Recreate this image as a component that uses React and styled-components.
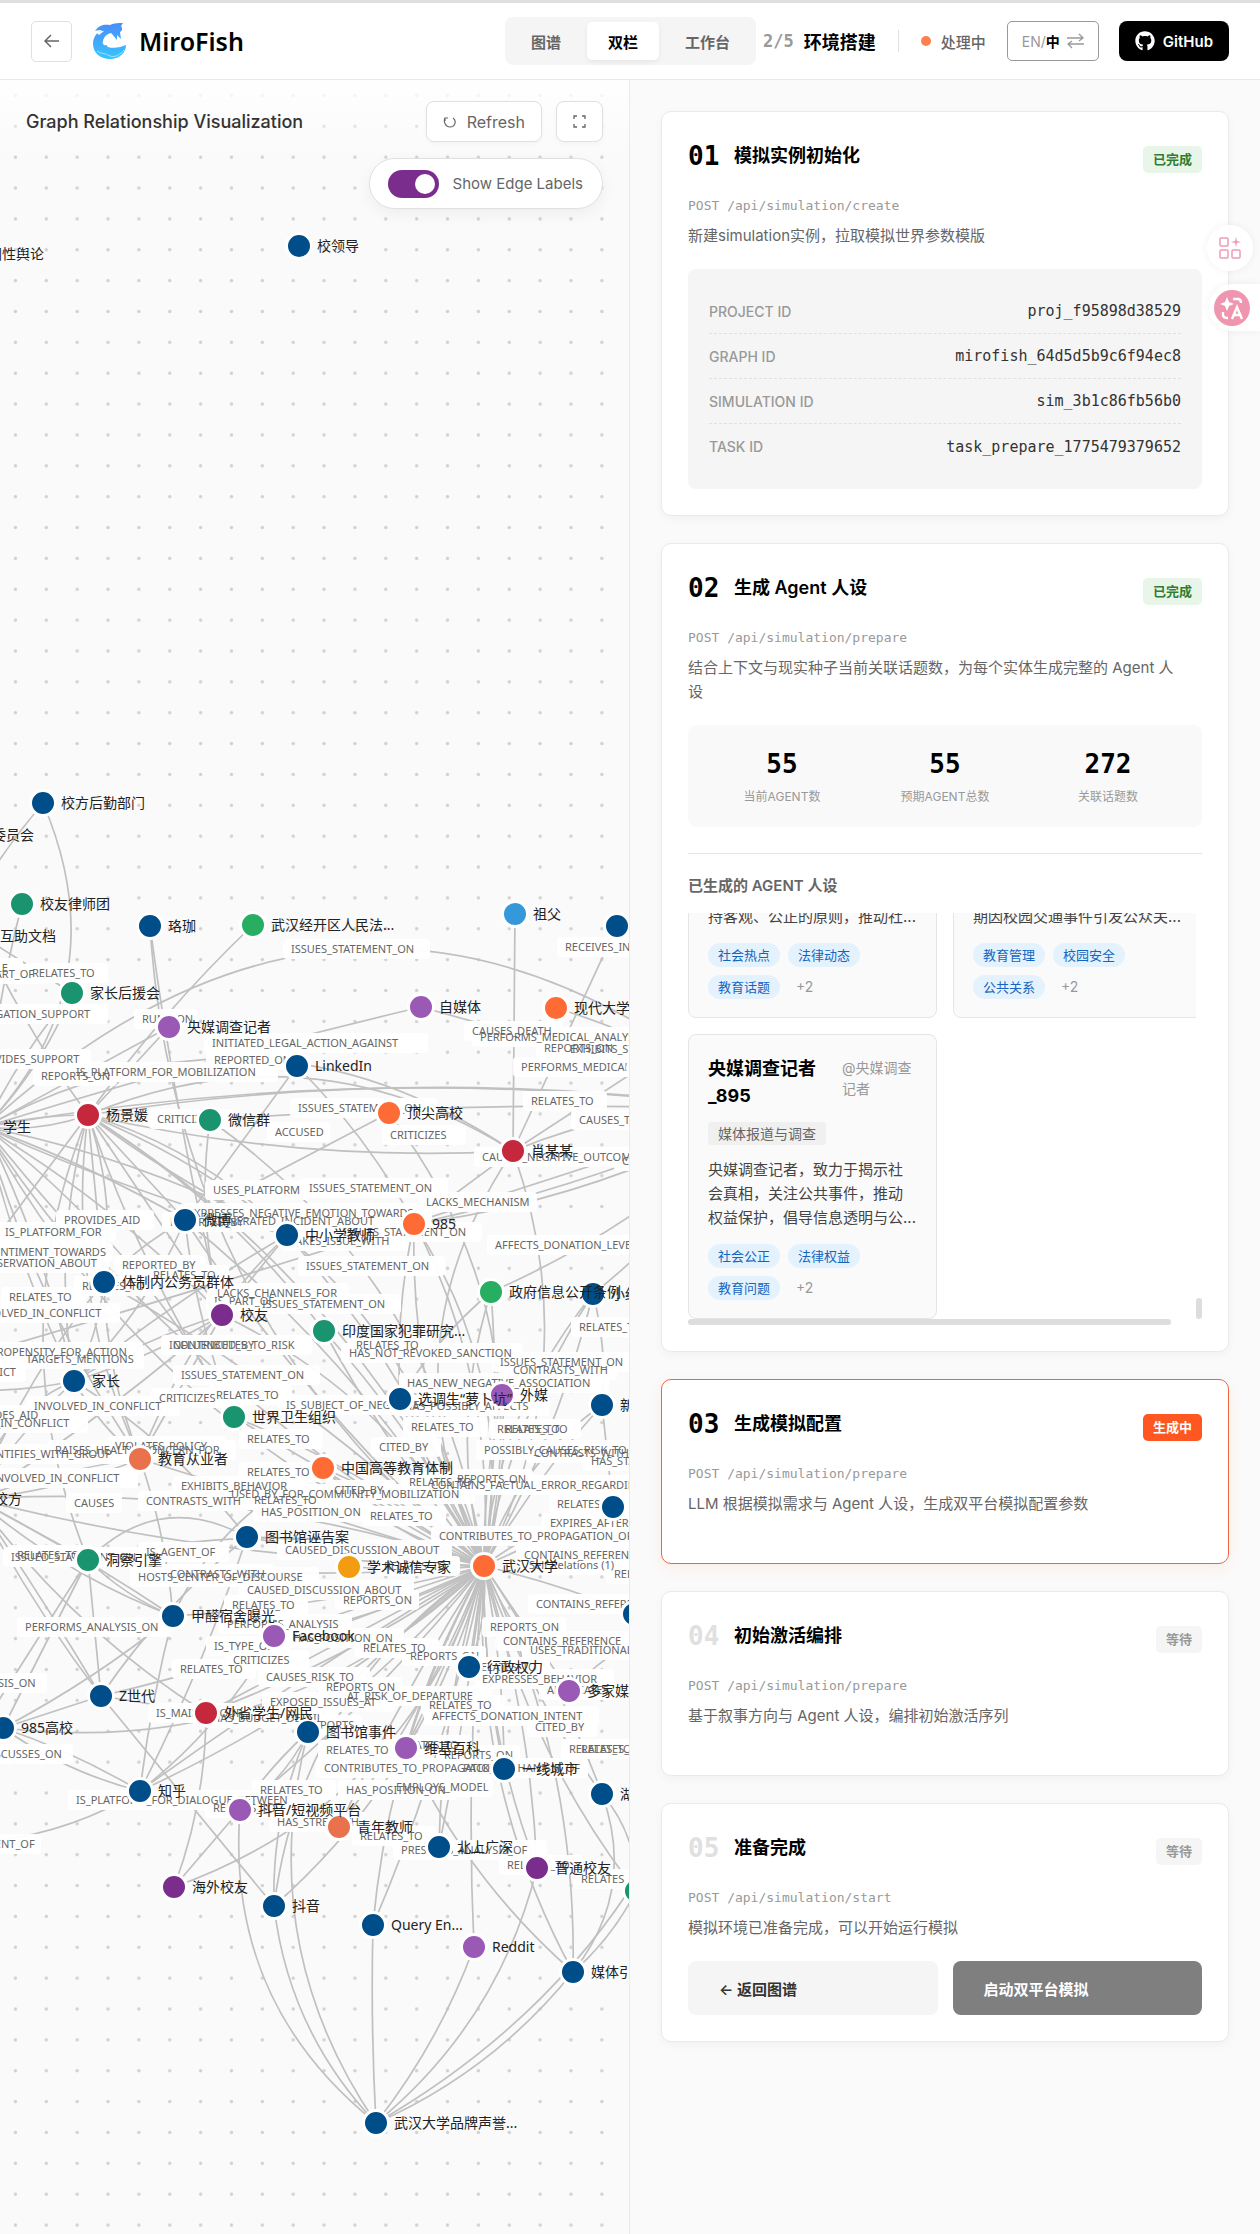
import { useState } from "react";
import styled, { createGlobalStyle, css } from "styled-components";
import { FaGithub } from "react-icons/fa";

const sans = `Inter, "Noto Sans CJK SC", sans-serif`;
const mono = `"DejaVu Sans Mono", "Noto Sans CJK SC", monospace`;

const GlobalStyle = createGlobalStyle`
  * {
    box-sizing: border-box;
  }
  body {
    margin: 0;
    font-family: ${sans};
    background: #fafafa;
  }
  button {
    font-family: inherit;
    cursor: pointer;
  }
`;

const Page = styled.div`
  min-height: 100vh;
  display: flex;
  flex-direction: column;
  border-top: 3px solid #dfdfdf;
  overflow: hidden;
`;

/* ---------- header ---------- */

const Header = styled.header`
  height: 77px;
  padding: 0 31px;
  display: flex;
  align-items: center;
  justify-content: space-between;
  background: #fff;
  border-bottom: 1px solid #eaeaea;
`;

const HeaderSide = styled.div`
  display: flex;
  align-items: center;
`;

const BackButton = styled.button`
  width: 41px;
  height: 41px;
  padding: 0;
  margin-right: 21px;
  border: 1px solid #e0e0e0;
  border-radius: 5px;
  background: #fff;
  display: flex;
  align-items: center;
  justify-content: center;
`;

const Brand = styled.a`
  display: flex;
  align-items: center;
  gap: 12px;
  color: #000;
  text-decoration: none;
  font-family: "Noto Sans", sans-serif;
  font-size: 25px;
  font-weight: 600;
`;

const Tabs = styled.nav`
  display: flex;
  gap: 5px;
  padding: 5px;
  margin-right: 7px;
  border-radius: 8px;
  background: #f5f5f5;
`;

const Tab = styled.button`
  height: 38px;
  padding: 0 21px;
  border: none;
  border-radius: 5px;
  font-size: 15px;
  font-weight: 600;
  color: #666;
  background: transparent;
  ${(props) =>
    props.$active &&
    css`
      color: #000;
      background: #fff;
      box-shadow: 0 2px 5px rgba(0, 0, 0, 0.06);
    `}
`;

const StepNumber = styled.span`
  font-family: ${mono};
  font-size: 17px;
  font-weight: 700;
  color: #999;
  margin-right: 10px;
`;

const StepName = styled.span`
  font-size: 18px;
  font-weight: 700;
  color: #000;
`;

const Divider = styled.span`
  width: 1px;
  height: 22px;
  margin: 0 22px;
  background: #e0e0e0;
`;

const Status = styled.span`
  display: flex;
  align-items: center;
  gap: 10px;
  margin-right: 21px;
  font-size: 15px;
  font-weight: 500;
  color: #666;

  &::before {
    content: "";
    width: 10px;
    height: 10px;
    border-radius: 50%;
    background: #ff7f50;
  }
`;

const LangButton = styled.button`
  height: 40px;
  padding: 0 14px;
  margin-right: 20px;
  display: flex;
  align-items: center;
  border: 1px solid #999;
  border-radius: 5px;
  background: #fff;
  font-size: 14px;
  color: #999;

  strong {
    color: #000;
  }
  svg {
    margin-left: 7px;
  }
`;

const GithubLink = styled.a`
  height: 40px;
  padding: 0 16px;
  display: flex;
  align-items: center;
  gap: 8px;
  border-radius: 8px;
  background: #000;
  color: #fff;
  font-size: 15px;
  font-weight: 600;
  text-decoration: none;
`;

/* ---------- graph panel ---------- */

const Main = styled.main`
  flex: 1;
  display: grid;
  grid-template-columns: 1fr 1fr;
`;

const GraphPanel = styled.section`
  position: relative;
  border-right: 1px solid #eaeaea;
  overflow: hidden;
`;

const Canvas = styled.svg`
  position: absolute;
  inset: 0;
  width: 100%;
  height: 100%;
`;

const GraphHeader = styled.div`
  position: relative;
  display: flex;
  align-items: center;
  gap: 14px;
  padding: 21px 26px 16px;
  background: linear-gradient(
    rgba(255, 255, 255, 0.95),
    rgba(255, 255, 255, 0)
  );
`;

const GraphTitle = styled.h2`
  flex: 1;
  margin: 0;
  font-size: 18px;
  font-weight: 500;
  color: #333;
`;

const ToolButton = styled.button`
  height: 41px;
  padding: 0 16px;
  display: flex;
  align-items: center;
  gap: 10px;
  border: 1px solid #e0e0e0;
  border-radius: 8px;
  background: #fff;
  box-shadow: 0 2px 5px rgba(0, 0, 0, 0.03);
  font-size: 16px;
  color: #666;
`;

const Toggle = styled.label`
  position: relative;
  width: fit-content;
  height: 51px;
  margin: 0 26px 0 auto;
  padding: 0 19px 0 18px;
  display: flex;
  align-items: center;
  gap: 14px;
  border: 1px solid #e0e0e0;
  border-radius: 26px;
  background: #fff;
  box-shadow: 0 5px 15px rgba(0, 0, 0, 0.05);
  font-size: 15px;
  color: #666;
`;

const Switch = styled.input`
  appearance: none;
  width: 51px;
  height: 28px;
  margin: 0;
  padding: 4px;
  display: flex;
  justify-content: flex-start;
  border-radius: 14px;
  background: #ccc;

  &:checked {
    justify-content: flex-end;
    background: #7b2d8e;
  }
  &::before {
    content: "";
    width: 20px;
    height: 20px;
    border-radius: 50%;
    background: #fff;
  }
`;

const NodeLabel = styled.text`
  font-family: "Noto Sans", "Noto Sans CJK SC", sans-serif;
  font-size: 14px;
  fill: #222;
`;

const EdgeLabel = styled.text`
  font-family: "Noto Sans", sans-serif;
  font-size: 11px;
  fill: #666;
`;

const blue = "#004e89";
const teal = "#1a936f";
const green = "#27ae60";
const purple = "#9b59b6";
const violet = "#7b2d8e";
const orange = "#ff6b35";
const coral = "#e9724c";
const red = "#c5283d";

// [x, y, colour, name]
const nodes = {
  leader: [299, 246, blue, "校领导"],
  publicOpinion: [-30, 254, blue, "间性舆论"],
  logistics: [43, 803, blue, "校方后勤部门"],
  committee: [-54, 835, teal, "纪律委员会"],
  lawyers: [22, 904, teal, "校友律师团"],
  luojia: [150, 926, blue, "珞珈"],
  court: [253, 925, green, "武汉经开区人民法..."],
  grandpa: [515, 914, "#3498db", "祖父"],
  right1: [617, 926, blue, ""],
  docs: [-18, 936, orange, "互助文档"],
  parents: [72, 993, teal, "家长后援会"],
  selfMedia: [421, 1007, purple, "自媒体"],
  modern: [556, 1008, orange, "现代大学"],
  reporter: [169, 1027, purple, "央媒调查记者"],
  linkedin: [297, 1066, blue, "LinkedIn"],
  right2: [640, 1068, orange, ""],
  topUni: [389, 1113, orange, "顶尖高校"],
  yang: [88, 1115, red, "杨景媛"],
  wechat: [210, 1120, teal, "微信群"],
  student: [-15, 1127, blue, "学生"],
  xiao: [513, 1151, red, "肖某某"],
  weibo: [185, 1220, blue, "微博"],
  p985: [414, 1224, orange, "985"],
  teachers: [287, 1235, blue, "中小学教师"],
  civil: [104, 1282, blue, "体制内公务员群体"],
  policy: [491, 1292, green, "政府信息公开条例"],
  redbook: [593, 1294, blue, "小红书"],
  alumni: [222, 1315, violet, "校友"],
  india: [324, 1331, teal, "印度国家犯罪研究..."],
  family: [74, 1381, blue, "家长"],
  foreign: [502, 1395, purple, "外媒"],
  selected: [400, 1399, blue, "选调生“萝卜坑”"],
  news: [602, 1405, blue, "新华社"],
  who: [234, 1417, teal, "世界卫生组织"],
  educator: [140, 1459, coral, "教育从业者"],
  eduSystem: [323, 1468, orange, "中国高等教育体制"],
  school: [-24, 1499, orange, "校方"],
  right3: [613, 1507, blue, ""],
  library: [247, 1537, blue, "图书馆诬告案"],
  insight: [88, 1560, teal, "洞察引擎"],
  whu: [484, 1566, orange, "武汉大学"],
  integrity: [349, 1567, "#f39c12", "学术诚信专家"],
  right4: [634, 1614, blue, ""],
  dorm: [173, 1616, blue, "甲醛宿舍曝光"],
  facebook: [274, 1636, purple, "Facebook"],
  power: [469, 1667, blue, "行政权力"],
  media: [569, 1691, purple, "多家媒体"],
  genZ: [101, 1696, blue, "Z世代"],
  netizen: [206, 1713, red, "外省学生/网民"],
  s985: [3, 1728, blue, "985高校"],
  libEvent: [308, 1732, blue, "图书馆事件"],
  wiki: [406, 1748, purple, "维基百科"],
  tier1: [504, 1769, blue, "一线城市"],
  zhihu: [140, 1791, blue, "知乎"],
  lake: [602, 1794, blue, "湖北"],
  shortVideo: [240, 1810, purple, "抖音/短视频平台"],
  young: [339, 1827, coral, "青年教师"],
  bigCities: [439, 1847, blue, "北上广深"],
  common: [537, 1868, violet, "普通校友"],
  overseas: [174, 1887, violet, "海外校友"],
  right5: [636, 1891, teal, ""],
  douyin: [274, 1906, blue, "抖音"],
  query: [373, 1925, blue, "Query En..."],
  reddit: [474, 1947, purple, "Reddit"],
  mediaGuide: [573, 1972, blue, "媒体引导"],
  reputation: [376, 2123, blue, "武汉大学品牌声誉..."],
  offTopLeft: [-80, 1010, teal, ""],
  offRight: [760, 1110, orange, ""],
  offRightLow: [740, 1600, blue, ""],
  offLeft: [-110, 1380, teal, ""],
  offLeftLow: [-90, 1840, teal, ""],
};

// [from, to, bend]
const edges = [
  ["logistics", "student", -108],
  ["logistics", "offTopLeft", 20],
  ["lawyers", "student", 10],
  ["docs", "yang", 10],
  ["docs", "parents", 0],
  ["parents", "student", 10],
  ["parents", "student", -16],
  ["luojia", "alumni", 10],
  ["luojia", "whu", 160],
  ["court", "yang", 12],
  ["reporter", "yang", 0],
  ["reporter", "student", 0],
  ["student", "offRight", -340],
  ["selfMedia", "student", 8],
  ["selfMedia", "right2", 0],
  ["student", "xiao", -160],
  ["yang", "xiao", -110],
  ["yang", "offRight", -50],
  ["student", "offRight", -60],
  ["linkedin", "weibo", 0],
  ["linkedin", "whu", -120],
  ["grandpa", "xiao", 0],
  ["right1", "xiao", 0],
  ["modern", "offRight", -20],
  ["right2", "xiao", 0],
  ["xiao", "offRight", -30],
  ["xiao", "p985", 0],
  ["xiao", "whu", -90],
  ["xiao", "whu", 120],
  ["p985", "offRight", 20],
  ["p985", "offRight", 34],
  ["p985", "teachers", 10],
  ["p985", "whu", 40],
  ["p985", "whu", -70],
  ["p985", "selected", 12],
  ["yang", "teachers", 12],
  ["yang", "teachers", -30],
  ["yang", "whu", -90],
  ["yang", "whu", -150],
  ["yang", "xiao", 30],
  ["yang", "weibo", 0],
  ["yang", "civil", 0],
  ["yang", "civil", -20],
  ["yang", "alumni", 0],
  ["yang", "educator", 50],
  ["yang", "family", 30],
  ["yang", "who", 20],
  ["yang", "india", -30],
  ["yang", "insight", 90],
  ["yang", "offLeft", 0],
  ["yang", "student", 6],
  ["yang", "student", -12],
  ["wechat", "alumni", 20],
  ["wechat", "whu", -110],
  ["wechat", "offRight", -16],
  ["student", "weibo", -10],
  ["student", "teachers", 14],
  ["student", "teachers", -24],
  ["student", "civil", 8],
  ["student", "family", -16],
  ["student", "family", 16],
  ["student", "alumni", -20],
  ["student", "who", -40],
  ["student", "educator", 30],
  ["student", "whu", 60],
  ["student", "whu", 120],
  ["student", "school", 30],
  ["topUni", "weibo", 0],
  ["topUni", "whu", -110],
  ["weibo", "whu", -40],
  ["weibo", "whu", 30],
  ["weibo", "who", 14],
  ["weibo", "civil", 8],
  ["weibo", "family", -20],
  ["teachers", "family", 10],
  ["teachers", "whu", -40],
  ["teachers", "alumni", 0],
  ["teachers", "educator", 30],
  ["civil", "whu", -30],
  ["civil", "school", 20],
  ["civil", "family", -10],
  ["civil", "educator", 16],
  ["offLeft", "offRight", 10],
  ["alumni", "family", 10],
  ["alumni", "family", -10],
  ["alumni", "whu", -60],
  ["alumni", "school", -12],
  ["alumni", "educator", 0],
  ["india", "whu", -20],
  ["india", "whu", 14],
  ["policy", "whu", 40],
  ["policy", "whu", -14],
  ["policy", "selected", 12],
  ["policy", "offRight", 30],
  ["redbook", "whu", 30],
  ["redbook", "whu", 46],
  ["redbook", "whu", -20],
  ["redbook", "news", -10],
  ["redbook", "offRight", 20],
  ["family", "school", 10],
  ["family", "school", 40],
  ["family", "offLeft", -20],
  ["family", "educator", 10],
  ["family", "library", -20],
  ["foreign", "whu", 10],
  ["foreign", "whu", -16],
  ["selected", "whu", 12],
  ["selected", "whu", -16],
  ["news", "whu", 10],
  ["news", "whu", 34],
  ["news", "right3", 0],
  ["who", "whu", 0],
  ["who", "whu", -24],
  ["educator", "whu", 0],
  ["educator", "school", -12],
  ["educator", "school", 10],
  ["eduSystem", "whu", 10],
  ["eduSystem", "whu", -14],
  ["eduSystem", "whu", 24],
  ["eduSystem", "dorm", 40],
  ["school", "whu", -50],
  ["school", "whu", 30],
  ["school", "insight", 0],
  ["school", "dorm", 20],
  ["school", "dorm", -6],
  ["school", "s985", 40],
  ["school", "genZ", 10],
  ["school", "netizen", 30],
  ["right3", "whu", 0],
  ["right3", "whu", 16],
  ["library", "whu", 10],
  ["library", "whu", -12],
  ["library", "insight", 60],
  ["library", "zhihu", -10],
  ["insight", "whu", 20],
  ["insight", "whu", -50],
  ["insight", "s985", 0],
  ["insight", "offLeftLow", 0],
  ["insight", "genZ", 0],
  ["insight", "dorm", 10],
  ["integrity", "whu", 4],
  ["right4", "whu", 6],
  ["dorm", "whu", 16],
  ["dorm", "s985", -10],
  ["dorm", "zhihu", 6],
  ["dorm", "educator", 10],
  ["facebook", "whu", 0],
  ["facebook", "whu", 18],
  ["facebook", "zhihu", -20],
  ["power", "whu", 0],
  ["power", "whu", 12],
  ["media", "whu", 0],
  ["media", "whu", -16],
  ["media", "offRightLow", -30],
  ["genZ", "whu", 20],
  ["genZ", "library", -16],
  ["genZ", "s985", 0],
  ["genZ", "douyin", 0],
  ["genZ", "offLeft", 10],
  ["genZ", "netizen", 0],
  ["netizen", "whu", 0],
  ["netizen", "whu", 20],
  ["netizen", "overseas", -16],
  ["s985", "whu", 120],
  ["s985", "zhihu", -8],
  ["s985", "zhihu", 14],
  ["libEvent", "whu", 10],
  ["libEvent", "whu", -14],
  ["libEvent", "shortVideo", 6],
  ["libEvent", "shortVideo", -14],
  ["libEvent", "douyin", 20],
  ["wiki", "whu", 6],
  ["wiki", "whu", -12],
  ["tier1", "whu", 10],
  ["tier1", "whu", -12],
  ["lake", "whu", 16],
  ["lake", "whu", -20],
  ["zhihu", "offLeftLow", -40],
  ["zhihu", "whu", 30],
  ["zhihu", "whu", -10],
  ["shortVideo", "whu", 20],
  ["shortVideo", "overseas", 0],
  ["shortVideo", "reputation", 90],
  ["young", "whu", -10],
  ["young", "whu", 20],
  ["bigCities", "whu", 6],
  ["bigCities", "whu", -20],
  ["wiki", "mediaGuide", 30],
  ["common", "whu", 20],
  ["common", "whu", -30],
  ["common", "reputation", -50],
  ["overseas", "whu", 110],
  ["douyin", "whu", -90],
  ["douyin", "whu", 60],
  ["douyin", "reputation", 40],
  ["query", "whu", -40],
  ["query", "whu", 20],
  ["query", "reputation", 4],
  ["reddit", "whu", -14],
  ["reddit", "reputation", -16],
  ["mediaGuide", "whu", -60],
  ["mediaGuide", "whu", 50],
  ["mediaGuide", "lake", 50],
  ["mediaGuide", "reputation", -30],
  ["right5", "whu", -40],
  ["right5", "mediaGuide", -10],
  ["right5", "lake", 20],
  ["reputation", "libEvent", -90],
  ["reputation", "offRightLow", 150],
];

// [x, y, text]
const edgeLabels = [
  [291, 949, "ISSUES_STATEMENT_ON"],
  [-46, 968, "HAS_TITLE"],
  [-26, 974, "IS_PART_OF"],
  [32, 973, "RELATES_TO"],
  [-24, 1014, "LITIGATION_SUPPORT"],
  [142, 1019, "RUNS_ON"],
  [212, 1043, "INITIATED_LEGAL_ACTION_AGAINST"],
  [-27, 1059, "PROVIDES_SUPPORT"],
  [214, 1060, "REPORTED_ON"],
  [76, 1072, "IS_PLATFORM_FOR_MOBILIZATION"],
  [41, 1076, "REPORTS_ON"],
  [298, 1108, "ISSUES_STATEMENT_ON"],
  [157, 1119, "CRITICIZES"],
  [275, 1132, "ACCUSED"],
  [390, 1135, "CRITICIZES"],
  [565, 947, "RECEIVES_INFO"],
  [472, 1031, "CAUSES_DEATH"],
  [480, 1037, "PERFORMS_MEDICAL_ANALYSIS"],
  [544, 1048, "REPORTS_ON"],
  [570, 1049, "EXHIBITS_SYMPTOM"],
  [521, 1067, "PERFORMS_MEDICAL"],
  [531, 1101, "RELATES_TO"],
  [579, 1120, "CAUSES_TRAUMA"],
  [482, 1157, "CAUSES_NEGATIVE_OUTCOME"],
  [622, 1161, "CITED_BY"],
  [213, 1190, "USES_PLATFORM"],
  [309, 1188, "ISSUES_STATEMENT_ON"],
  [426, 1202, "LACKS_MECHANISM"],
  [188, 1213, "EXPRESSES_NEGATIVE_EMOTION_TOWARDS"],
  [64, 1220, "PROVIDES_AID"],
  [170, 1222, "REPORTED_BY"],
  [214, 1221, "GENERATED_INCIDENT_ABOUT"],
  [5, 1232, "IS_PLATFORM_FOR"],
  [343, 1232, "ISSUES_STATEMENT_ON"],
  [290, 1241, "TAKES_ISSUE_WITH"],
  [495, 1245, "AFFECTS_DONATION_LEVEL"],
  [-12, 1252, "SENTIMENT_TOWARDS"],
  [-16, 1263, "RESERVATION_ABOUT"],
  [122, 1265, "REPORTED_BY"],
  [306, 1266, "ISSUES_STATEMENT_ON"],
  [153, 1275, "RELATES_TO"],
  [82, 1286, "RELATES_TO"],
  [217, 1293, "LACKS_CHANNELS_FOR"],
  [9, 1297, "RELATES_TO"],
  [214, 1301, "IS_PART_OF"],
  [262, 1304, "ISSUES_STATEMENT_ON"],
  [-26, 1313, "INVOLVED_IN_CONFLICT"],
  [579, 1327, "RELATES_TO"],
  [169, 1345, "INFLUENCED_BY"],
  [173, 1345, "CONTRIBUTES_TO_RISK"],
  [356, 1345, "RELATES_TO"],
  [-10, 1352, "PROPENSITY_FOR_ACTION"],
  [349, 1353, "HAS_NOT_REVOKED_SANCTION"],
  [26, 1359, "TARGETS_MENTIONS"],
  [500, 1362, "ISSUES_STATEMENT_ON"],
  [513, 1370, "CONTRASTS_WITH"],
  [-36, 1372, "CONFLICT"],
  [181, 1375, "ISSUES_STATEMENT_ON"],
  [407, 1383, "HAS_NEW_NEGATIVE_ASSOCIATION"],
  [216, 1395, "RELATES_TO"],
  [159, 1398, "CRITICIZES"],
  [286, 1405, "IS_SUBJECT_OF_NEGATIVE"],
  [404, 1406, "HAS_POSSIBLY_AFFECTS"],
  [34, 1406, "INVOLVED_IN_CONFLICT"],
  [-38, 1415, "PROVIDES_AID"],
  [-58, 1423, "INVOLVED_IN_CONFLICT"],
  [411, 1427, "RELATES_TO"],
  [497, 1429, "RELATES_TO"],
  [505, 1429, "RELATES_TO"],
  [247, 1439, "RELATES_TO"],
  [115, 1446, "VIOLATES_POLICY"],
  [379, 1447, "CITED_BY"],
  [55, 1450, "RAISES_HEALTH_CONCERN_FOR"],
  [484, 1450, "POSSIBLY_CAUSES_RISK_TO"],
  [534, 1453, "CONTRASTS_WITH_POLICY"],
  [-22, 1454, "IDENTIFIES_WITH_GROUP"],
  [591, 1461, "HAS_STANCE"],
  [247, 1472, "RELATES_TO"],
  [-8, 1478, "INVOLVED_IN_CONFLICT"],
  [457, 1479, "REPORTS_ON"],
  [409, 1482, "RELATES_TO"],
  [431, 1485, "CONTAINS_FACTUAL_ERROR_REGARDING"],
  [181, 1486, "EXHIBITS_BEHAVIOR"],
  [334, 1490, "CITED_BY"],
  [231, 1494, "USED_BY_FOR_COMMUNITY_MOBILIZATION"],
  [146, 1501, "CONTRASTS_WITH"],
  [254, 1500, "RELATES_TO"],
  [74, 1503, "CAUSES"],
  [557, 1504, "RELATES_TO"],
  [261, 1512, "HAS_POSITION_ON"],
  [370, 1516, "RELATES_TO"],
  [550, 1523, "EXPIRES_AFTER"],
  [439, 1536, "CONTRIBUTES_TO_PROPAGATION_OF"],
  [285, 1550, "CAUSED_DISCUSSION_ABOUT"],
  [146, 1552, "IS_AGENT_OF"],
  [17, 1555, "RELATES_TO"],
  [11, 1557, "ISSUED_STATEMENT_ON"],
  [524, 1555, "CONTAINS_REFERENCE"],
  [529, 1565, "Self Relations (1)"],
  [384, 1566, "RELATES_TO"],
  [170, 1574, "CONTRASTS_WITH"],
  [138, 1577, "HOSTS_CENTER_OF_DISCOURSE"],
  [614, 1574, "RELATES_TO"],
  [247, 1590, "CAUSED_DISCUSSION_ABOUT"],
  [343, 1600, "REPORTS_ON"],
  [536, 1604, "CONTAINS_REFERENCE"],
  [232, 1605, "RELATES_TO"],
  [227, 1624, "PERFORMS_ANALYSIS"],
  [25, 1627, "PERFORMS_ANALYSIS_ON"],
  [490, 1627, "REPORTS_ON"],
  [293, 1638, "HAS_POSITION_ON"],
  [503, 1641, "CONTAINS_REFERENCE"],
  [214, 1646, "IS_TYPE_OF"],
  [363, 1648, "RELATES_TO"],
  [530, 1650, "USES_TRADITIONAL"],
  [410, 1656, "REPORTS_ON"],
  [233, 1660, "CRITICIZES"],
  [474, 1667, "RELATES_TO"],
  [180, 1669, "RELATES_TO"],
  [266, 1677, "CAUSES_RISK_TO"],
  [482, 1679, "EXPRESSES_BEHAVIOR"],
  [-36, 1683, "ANALYSIS_ON"],
  [326, 1687, "REPORTS_ON"],
  [547, 1690, "ADVOCATES"],
  [347, 1696, "AT_RISK_OF_DEPARTURE"],
  [270, 1702, "EXPOSED_ISSUES_AT"],
  [429, 1705, "RELATES_TO"],
  [156, 1713, "IS_MAIN_GROUP"],
  [432, 1716, "AFFECTS_DONATION_INTENT"],
  [212, 1718, "HAS_BUDGET_DETAIL"],
  [307, 1725, "REPORTS"],
  [535, 1727, "CITED_BY"],
  [396, 1745, "RELATES_TO"],
  [569, 1749, "RELATES_TO"],
  [581, 1749, "RELATES_TO"],
  [326, 1750, "RELATES_TO"],
  [444, 1755, "REPORTS_ON"],
  [-17, 1754, "DISCUSSES_ON"],
  [324, 1768, "CONTRIBUTES_TO_PROPAGATION"],
  [463, 1768, "PACK_MECHANISM_OF"],
  [396, 1787, "EMPLOYS_MODEL"],
  [260, 1790, "RELATES_TO"],
  [346, 1790, "HAS_POSITION_ON"],
  [76, 1800, "IS_PLATFORM_FOR_DIALOGUE_BETWEEN"],
  [213, 1808, "RELATES_TO"],
  [277, 1822, "HAS_STRENGTH"],
  [360, 1836, "RELATES_TO"],
  [-49, 1844, "AGREEMENT_OF"],
  [401, 1850, "PRESENTS_ANALYSIS_OF"],
  [507, 1865, "RELATES_TO"],
  [581, 1879, "RELATES_TO"],
];

const LETTER_WIDTH = 7;

function edgePath([from, to, bend]) {
  const [x1, y1] = nodes[from];
  const [x2, y2] = nodes[to];
  const length = Math.hypot(x2 - x1, y2 - y1);
  const cx = (x1 + x2) / 2 - ((y2 - y1) / length) * bend;
  const cy = (y1 + y2) / 2 + ((x2 - x1) / length) * bend;
  return `M${x1} ${y1} Q${cx} ${cy} ${x2} ${y2}`;
}

const Graph = ({ showLabels }) => (
  <Canvas>
    <defs>
      <pattern
        id="dots"
        width="24"
        height="24"
        patternUnits="userSpaceOnUse"
        patternTransform="scale(1.286)"
      >
        <circle cx="12" cy="12" r="1.3" fill="#d0d0d0" />
      </pattern>
    </defs>
    <rect width="100%" height="100%" fill="#fafafa" />
    <rect width="100%" height="100%" fill="url(#dots)" />
    <g transform="translate(0 -80)">
      <g fill="none" stroke="#c0c0c0" strokeWidth="1.7">
        {edges.map((edge, i) => (
          <path key={i} d={edgePath(edge)} />
        ))}
      </g>
      {showLabels && (
        <g>
          {edgeLabels.map(([x, y, text], i) => (
            <rect
              key={i}
              x={x - 8}
              y={y - 10}
              width={text.length * LETTER_WIDTH + 14}
              height="20"
              rx="4"
              fill="#fff"
              fillOpacity="0.95"
            />
          ))}
          {edgeLabels.map(([x, y, text], i) => (
            <EdgeLabel key={i} x={x} y={y + 4}>
              {text}
            </EdgeLabel>
          ))}
        </g>
      )}
      {Object.entries(nodes).map(([id, [x, y, color]]) => (
        <circle
          key={id}
          cx={x}
          cy={y}
          r="12.5"
          fill={color}
          stroke="#fff"
          strokeWidth="3"
        />
      ))}
      {Object.entries(nodes).map(([id, [x, y, , name]]) => (
        <NodeLabel key={id} x={x + 18} y={y + 5}>
          {name}
        </NodeLabel>
      ))}
    </g>
  </Canvas>
);

/* ---------- steps panel ---------- */

const Steps = styled.section`
  min-width: 0;
  padding: 31px;
  display: flex;
  flex-direction: column;
  gap: 27px;
`;

const Card = styled.article`
  padding: 26px;
  border: 1px solid ${(props) => (props.$active ? "#f0663c" : "#eaeaea")};
  border-radius: 10px;
  background: #fff;
  box-shadow: ${(props) =>
    props.$active
      ? "0 5px 15px rgba(255, 87, 34, 0.08)"
      : "0 3px 10px rgba(0, 0, 0, 0.04)"};
`;

const CardHead = styled.div`
  height: 36px;
  margin-bottom: 22px;
  display: flex;
  align-items: center;
`;

const CardNumber = styled.span`
  width: 46px;
  font-family: ${mono};
  font-size: 26px;
  font-weight: 700;
  color: ${(props) => (props.$muted ? "#e0e0e0" : "#000")};
`;

const CardTitle = styled.h3`
  flex: 1;
  margin: 0;
  font-size: 18px;
  line-height: 24px;
  font-weight: 600;
  color: #000;
`;

const badgeColors = {
  done: "color: #2e7d32; background: #e8f5e9;",
  active: "color: #fff; background: #ff5722;",
  waiting: "color: #999; background: #f5f5f5;",
};

const Badge = styled.span`
  height: 27px;
  margin-top: 6px;
  padding: 0 10px;
  border-radius: 5px;
  font-size: 13px;
  line-height: 26px;
  font-weight: 600;
  ${(props) => badgeColors[props.$kind]}
`;

const Endpoint = styled.p`
  margin: 0 0 8px;
  font-family: ${mono};
  font-size: 13px;
  line-height: 20px;
  color: #999;
`;

const Desc = styled.p`
  margin: 0 0 21px;
  padding-right: 16px;
  font-size: 15px;
  line-height: 24px;
  color: #666;
`;

const InfoBox = styled.dl`
  margin: 0;
  padding: 20px 21px;
  border-radius: 8px;
  background: #f5f5f5;
`;

const InfoRow = styled.div`
  height: 45px;
  display: flex;
  align-items: center;
  justify-content: space-between;
  border-bottom: 1px dashed #e0e0e0;

  &:last-child {
    border-bottom: none;
  }
  dt {
    font-size: 14px;
    font-weight: 500;
    color: #999;
  }
  dd {
    margin: 0;
    font-family: ${mono};
    font-size: 15px;
    color: #333;
  }
`;

const Stats = styled.div`
  display: grid;
  grid-template-columns: repeat(3, 1fr);
  gap: 15px;
  padding: 20px;
  border-radius: 8px;
  background: #f9f9f9;
  text-align: center;
`;

const StatValue = styled.div`
  font-family: ${mono};
  font-size: 26px;
  line-height: 38px;
  font-weight: 700;
  color: #000;
`;

const StatLabel = styled.div`
  margin-top: 4px;
  font-size: 12px;
  line-height: 20px;
  color: #999;
`;

const ProfileHeading = styled.h4`
  margin: 26px 0 15px;
  padding-top: 20px;
  border-top: 1px solid #e5e5e5;
  font-size: 15px;
  line-height: 24px;
  font-weight: 600;
  color: #666;
`;

const Scroller = styled.div`
  display: grid;
  grid-template-columns: minmax(0, 1fr) 6px;
  grid-template-rows: 406px 6px;
`;

const ScrollView = styled.div`
  overflow: hidden;
  display: flex;
  flex-direction: column;
  justify-content: flex-end;
`;

const Profiles = styled.div`
  flex: none;
  display: grid;
  grid-template-columns: 1fr 1fr;
  gap: 16px;
  margin-right: -6px;
`;

const Thumb = styled.div`
  border-radius: 3px;
  background: #ddd;
  ${(props) =>
    props.$vertical
      ? "height: 21px; align-self: end;"
      : "width: 95%;"}
`;

const Profile = styled.div`
  min-width: 0;
  padding: 20px 19px 18px;
  border: 1px solid #e5e5e5;
  border-radius: 8px;
  background: #fafafa;
`;

const ProfileTop = styled.div`
  display: flex;
  justify-content: space-between;
  gap: 20px;
  min-height: 54px;
  margin-bottom: 13px;
`;

const ProfileName = styled.span`
  width: 110px;
  font-size: 18px;
  line-height: 27px;
  font-weight: 700;
  color: #000;
  overflow-wrap: anywhere;
`;

const Handle = styled.span`
  width: 75px;
  padding-top: 2px;
  font-size: 14px;
  line-height: 21px;
  color: #999;
`;

const Role = styled.span`
  display: inline-block;
  padding: 0 10px;
  border-radius: 3px;
  background: #f0f0f0;
  font-size: 14px;
  line-height: 23px;
  color: #666;
`;

const Bio = styled.p`
  margin: 13px 0 14px;
  font-size: 15px;
  line-height: 24px;
  white-space: pre;
  color: #444;
`;

const Tags = styled.div`
  display: flex;
  flex-wrap: wrap;
  gap: 8px;
`;

const Tag = styled.span`
  padding: 0 10px;
  border-radius: 12px;
  background: #e3f2fd;
  font-size: 13px;
  line-height: 24px;
  color: #1565c0;
`;

const MoreTags = styled(Tag)`
  padding: 0 8px;
  background: none;
  font-size: 14px;
  color: #999;
`;

const Actions = styled.div`
  display: grid;
  grid-template-columns: 1fr 1fr;
  gap: 15px;
`;

const ActionButton = styled.button`
  height: 54px;
  padding: 0 31px;
  border: none;
  border-radius: 8px;
  text-align: left;
  font-size: 15px;
  font-weight: 600;
  color: ${(props) => (props.$primary ? "#fff" : "#333")};
  background: ${(props) => (props.$primary ? "#7f7f7f" : "#f5f5f5")};
`;

/* ---------- floating widgets ---------- */

const FloatingApps = styled.button`
  position: absolute;
  top: 225px;
  right: 7px;
  width: 46px;
  height: 46px;
  padding: 0;
  display: flex;
  align-items: center;
  justify-content: center;
  border: none;
  border-radius: 50%;
  background: rgba(255, 255, 255, 0.9);
  box-shadow: 0 0 8px rgba(0, 0, 0, 0.06);
`;

const FloatingTranslate = styled.button`
  position: absolute;
  top: 284px;
  right: 0;
  width: 51px;
  height: 47px;
  padding: 0 0 0 5px;
  display: flex;
  align-items: center;
  border: none;
  border-radius: 24px 0 0 24px;
  background: rgba(255, 255, 255, 0.9);
  box-shadow: 0 0 8px rgba(0, 0, 0, 0.06);
`;

const Logo = () => (
  <svg width="34" height="36" viewBox="0 0 34 36" aria-hidden="true">
    <defs>
      <linearGradient id="water" x1="0" y1="0" x2="0" y2="1">
        <stop offset="0" stopColor="#4a8df8" />
        <stop offset="1" stopColor="#38c4ff" />
      </linearGradient>
    </defs>
    <path
      fill="url(#water)"
      d="M2 8C6 2 11 1 17 2C21 0 26 0 30 0L28 3C30 6 29 8 27 9L28 16L24 12L24 17L19 11C14 13 12 17 13 20C16 21 17 23 15 24C21 26 28 24 33 22C33 30 26 36 17 36C8 36 0 30 0 21C0 14 4 9 9 7C7 7 4 7 2 8Z"
    />
    <path
      fill="#fff"
      d="M10 18C11 13 15 10 19 10L17 14C18 16 20 16 21 14L24 18C22 21 19 21 17 19C14 20 17 23 22 23C17 25 13 24 14 22C11 23 9 21 10 18Z"
    />
    <path fill="#fff" d="M3 9C6 8 8 8 11 8L6 12Z" />
    <path
      fill="none"
      stroke="#9be4ff"
      strokeWidth="1"
      d="M4 28C8 31 12 30 17 33C22 35 28 31 31 27"
    />
  </svg>
);

const infoRows = [
  ["PROJECT ID", "proj_f95898d38529"],
  ["GRAPH ID", "mirofish_64d5d5b9c6f94ec8"],
  ["SIMULATION ID", "sim_3b1c86fb56b0"],
  ["TASK ID", "task_prepare_1775479379652"],
];

const stats = [
  ["55", "当前AGENT数"],
  ["55", "预期AGENT总数"],
  ["272", "关联话题数"],
];

const profiles = [
  {
    name: "新闻媒体_406",
    handle: "@新闻媒体",
    role: "媒体报道与调查",
    bio: ["新闻媒体，关注社会热点与", "法律动态，报道过程中始终", "持客观、公正的原则，推动社..."],
    tags: ["社会热点", "法律动态", "教育话题"],
  },
  {
    name: "现代大学_382",
    handle: "@现代大学",
    role: "高等教育机构",
    bio: ["现代大学，注重教学质量与", "学生成长，重视校园管理近", "期因校园交通事件引发公众关..."],
    tags: ["教育管理", "校园安全", "公共关系"],
  },
  {
    name: "央媒调查记者_895",
    handle: "@央媒调查记者",
    role: "媒体报道与调查",
    bio: ["央媒调查记者，致力于揭示社", "会真相，关注公共事件，推动", "权益保护，倡导信息透明与公..."],
    tags: ["社会公正", "法律权益", "教育问题"],
  },
];

const StepCard = ({ number, title, kind, badge, endpoint, desc, children }) => (
  <Card $active={kind === "active"}>
    <CardHead>
      <CardNumber $muted={kind === "waiting"}>{number}</CardNumber>
      <CardTitle>{title}</CardTitle>
      <Badge $kind={kind}>{badge}</Badge>
    </CardHead>
    <Endpoint>POST {endpoint}</Endpoint>
    <Desc>{desc}</Desc>
    {children}
  </Card>
);

const App = () => {
  const [tab, setTab] = useState("双栏");
  const [showLabels, setShowLabels] = useState(true);

  return (
    <Page>
      <GlobalStyle />
      <Header>
        <HeaderSide>
          <BackButton aria-label="返回">
            <svg width="16" height="14" fill="none" stroke="#666" strokeWidth="1.5">
              <path d="M15 7H1M7 1L1 7L7 13" />
            </svg>
          </BackButton>
          <Brand href="#">
            <Logo />
            MiroFish
          </Brand>
        </HeaderSide>
        <HeaderSide>
          <Tabs>
            {["图谱", "双栏", "工作台"].map((name) => (
              <Tab key={name} $active={tab === name} onClick={() => setTab(name)}>
                {name}
              </Tab>
            ))}
          </Tabs>
          <StepNumber>2/5</StepNumber>
          <StepName>环境搭建</StepName>
          <Divider />
          <Status>处理中</Status>
          <LangButton>
            EN/<strong>中</strong>
            <svg width="17" height="16" fill="none" stroke="#999" strokeWidth="1.3">
              <path d="M0 5H16M12 1L16 5L12 8M17 11H1M5 8L1 11L5 15" />
            </svg>
          </LangButton>
          <GithubLink href="#">
            <FaGithub size={20} />
            GitHub
          </GithubLink>
        </HeaderSide>
      </Header>

      <Main>
        <GraphPanel>
          <Graph showLabels={showLabels} />
          <GraphHeader>
            <GraphTitle>Graph Relationship Visualization</GraphTitle>
            <ToolButton>
              <svg width="14" height="12" fill="none" stroke="#666" strokeWidth="1.2">
                <path d="M5 2H2V5M2 2C0 6 3 11 7 11C12 11 14 5 10 2" />
              </svg>
              Refresh
            </ToolButton>
            <ToolButton aria-label="全屏">
              <svg width="13" height="13" fill="none" stroke="#666" strokeWidth="1.3">
                <path d="M1 4V1H4M9 1H12V4M12 9V12H9M4 12H1V9" />
              </svg>
            </ToolButton>
          </GraphHeader>
          <Toggle>
            <Switch
              type="checkbox"
              checked={showLabels}
              onChange={(e) => setShowLabels(e.target.checked)}
            />
            Show Edge Labels
          </Toggle>
        </GraphPanel>

        <Steps>
          <StepCard
            number="01"
            title="模拟实例初始化"
            kind="done"
            badge="已完成"
            endpoint="/api/simulation/create"
            desc="新建simulation实例，拉取模拟世界参数模版"
          >
            <InfoBox>
              {infoRows.map(([label, value]) => (
                <InfoRow key={label}>
                  <dt>{label}</dt>
                  <dd>{value}</dd>
                </InfoRow>
              ))}
            </InfoBox>
          </StepCard>

          <StepCard
            number="02"
            title="生成 Agent 人设"
            kind="done"
            badge="已完成"
            endpoint="/api/simulation/prepare"
            desc="结合上下文与现实种子当前关联话题数，为每个实体生成完整的 Agent 人设"
          >
            <Stats>
              {stats.map(([value, label]) => (
                <div key={label}>
                  <StatValue>{value}</StatValue>
                  <StatLabel>{label}</StatLabel>
                </div>
              ))}
            </Stats>
            <ProfileHeading>已生成的 AGENT 人设</ProfileHeading>
            <Scroller>
              <ScrollView>
                <Profiles>
                  {profiles.map((profile) => (
                    <Profile key={profile.name}>
                      <ProfileTop>
                        <ProfileName>{profile.name}</ProfileName>
                        <Handle>{profile.handle}</Handle>
                      </ProfileTop>
                      <Role>{profile.role}</Role>
                      <Bio>{profile.bio.join("\n")}</Bio>
                      <Tags>
                        {profile.tags.map((tag) => (
                          <Tag key={tag}>{tag}</Tag>
                        ))}
                        <MoreTags>+2</MoreTags>
                      </Tags>
                    </Profile>
                  ))}
                </Profiles>
              </ScrollView>
              <Thumb $vertical />
              <Thumb />
            </Scroller>
          </StepCard>

          <StepCard
            number="03"
            title="生成模拟配置"
            kind="active"
            badge="生成中"
            endpoint="/api/simulation/prepare"
            desc="LLM 根据模拟需求与 Agent 人设，生成双平台模拟配置参数"
          />

          <StepCard
            number="04"
            title="初始激活编排"
            kind="waiting"
            badge="等待"
            endpoint="/api/simulation/prepare"
            desc="基于叙事方向与 Agent 人设，编排初始激活序列"
          />

          <StepCard
            number="05"
            title="准备完成"
            kind="waiting"
            badge="等待"
            endpoint="/api/simulation/start"
            desc="模拟环境已准备完成，可以开始运行模拟"
          >
            <Actions>
              <ActionButton>← 返回图谱</ActionButton>
              <ActionButton $primary>启动双平台模拟</ActionButton>
            </Actions>
          </StepCard>
        </Steps>
      </Main>

      <FloatingApps aria-label="应用">
        <svg width="24" height="28" viewBox="0 0 24 28" fill="none" stroke="#ee9db5" strokeWidth="1.5">
          <rect x="2" y="4" width="8" height="8" rx="1" />
          <rect x="2" y="16" width="8" height="8" rx="1" />
          <rect x="14" y="16" width="8" height="8" rx="1" />
          <path fill="#ee9db5" d="M18 3L19 7L23 8L19 9L18 13L17 9L13 8L17 7Z" stroke="none" />
        </svg>
      </FloatingApps>
      <FloatingTranslate aria-label="翻译">
        <svg width="36" height="36" viewBox="0 0 36 36" fill="none" stroke="#fff" strokeWidth="2.4">
          <circle cx="18" cy="18" r="18" fill="#f095b0" stroke="none" />
          <path fill="#fff" stroke="none" d="M13 7L15 12L20 14L15 16L13 21L11 16L6 14L11 12Z" />
          <path d="M19 9H24Q27 9 27 13M9 22V25Q9 28 14 28M18 29L23 17L28 29M20 25H27" />
        </svg>
      </FloatingTranslate>
    </Page>
  );
};

export default App;
